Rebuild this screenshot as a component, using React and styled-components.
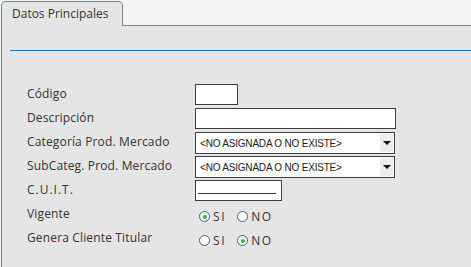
import React from "react";
import styled, { createGlobalStyle } from "styled-components";

const Global = createGlobalStyle`
  html, body {
    margin: 0;
    padding: 0;
    background: #f4f4f4;
    height: 100%;
    overflow: hidden;
  }
  body {
    font-family: "Open Sans", "DejaVu Sans", sans-serif;
    font-size: 12px;
    color: #363232;
  }
`;

const Root = styled.div`
  display: flex;
  flex-direction: column;
  height: 267px;
  padding: 1px 0 0 1px;
  box-sizing: border-box;
`;

const TabBar = styled.div`
  display: flex;
  height: 24px;
`;

const Tab = styled.div`
  width: 122px;
  height: 25px;
  box-sizing: border-box;
  border: 1px solid #7c8289;
  border-bottom: none;
  border-radius: 5px 5px 0 0;
  background: #e5e5e5;
  padding: 3px 0 0 10px;
  position: relative;
  z-index: 1;
  white-space: nowrap;
`;

const Panel = styled.div`
  flex: 1;
  background: #e5e5e5;
  border-top: 1px solid #7c8289;
  border-left: 1px solid #7c8289;
  padding: 24px 0 0 8px;
`;

const Rule = styled.div`
  height: 1px;
  background: #1b72bd;
`;

const Form = styled.div`
  display: grid;
  grid-template-columns: 168px 1fr;
  grid-auto-rows: 24px;
  padding: 33px 0 0 17px;
  align-items: start;
`;

const Label = styled.div`
  line-height: 18px;
  padding-top: 1px;
  letter-spacing: ${(p) => (p.$spaced ? "1px" : "0.15px")};
  white-space: nowrap;
`;

const TextBox = styled.div`
  width: ${(p) => p.$width}px;
  height: 21px;
  box-sizing: border-box;
  border: 1px solid #3e3e3e;
  background: #fff;
  display: flex;
  align-items: flex-end;
  padding: 0 0 6px 2px;
`;

const Underline = styled.div`
  width: 78px;
  height: 1px;
  background: #333;
`;

const SelectBox = styled.div`
  width: 200px;
  height: 22px;
  box-sizing: border-box;
  border: 1px solid #3e3e3e;
  background: #fff;
  display: flex;
  align-items: center;
  padding: 1px 1px 1px 4px;
`;

const SelectText = styled.span`
  flex: 1;
  font-family: "Liberation Sans", Arial, sans-serif;
  font-size: 10px;
  letter-spacing: -0.2px;
  color: #222;
  white-space: nowrap;
`;

const Arrow = styled.div`
  width: 13px;
  align-self: stretch;
  background: #ececec;
  display: flex;
  align-items: center;
  justify-content: center;

  &::after {
    content: "";
    border-left: 4px solid transparent;
    border-right: 4px solid transparent;
    border-top: 4px solid #111;
  }
`;

const Radios = styled.div`
  display: flex;
  align-items: center;
  height: 21px;
  padding: 2px 0 0 4px;
`;

const Option = styled.label`
  display: flex;
  align-items: center;
  margin-right: 11px;
  letter-spacing: 1.6px;
  line-height: 12px;
`;

const Dot = styled.span`
  width: 11px;
  height: 11px;
  box-sizing: border-box;
  border-radius: 50%;
  border: 1px solid #3f5f80;
  background: #fff;
  margin-right: 3px;
  display: flex;
  align-items: center;
  justify-content: center;

  &::after {
    content: "";
    width: 4px;
    height: 4px;
    border-radius: 50%;
    background: ${(p) => (p.$on ? "#2fb52f" : "transparent")};
  }
`;

const YesNo = ({ value }) => (
  <Radios>
    <Option>
      <Dot $on={value === "SI"} />
      SI
    </Option>
    <Option>
      <Dot $on={value === "NO"} />
      NO
    </Option>
  </Radios>
);

const Select = () => (
  <SelectBox>
    <SelectText>&lt;NO ASIGNADA O NO EXISTE&gt;</SelectText>
    <Arrow />
  </SelectBox>
);

export default function App() {
  return (
    <Root>
      <Global />
      <TabBar>
        <Tab>Datos Principales</Tab>
      </TabBar>
      <Panel>
        <Rule />
        <Form>
          <Label>Código</Label>
          <TextBox $width={43} />
          <Label>Descripción</Label>
          <TextBox $width={201} />
          <Label>Categoría Prod. Mercado</Label>
          <Select />
          <Label>SubCateg. Prod. Mercado</Label>
          <Select />
          <Label $spaced>C.U.I.T.</Label>
          <TextBox $width={87}>
            <Underline />
          </TextBox>
          <Label>Vigente</Label>
          <YesNo value="SI" />
          <Label>Genera Cliente Titular</Label>
          <YesNo value="NO" />
        </Form>
      </Panel>
    </Root>
  );
}
